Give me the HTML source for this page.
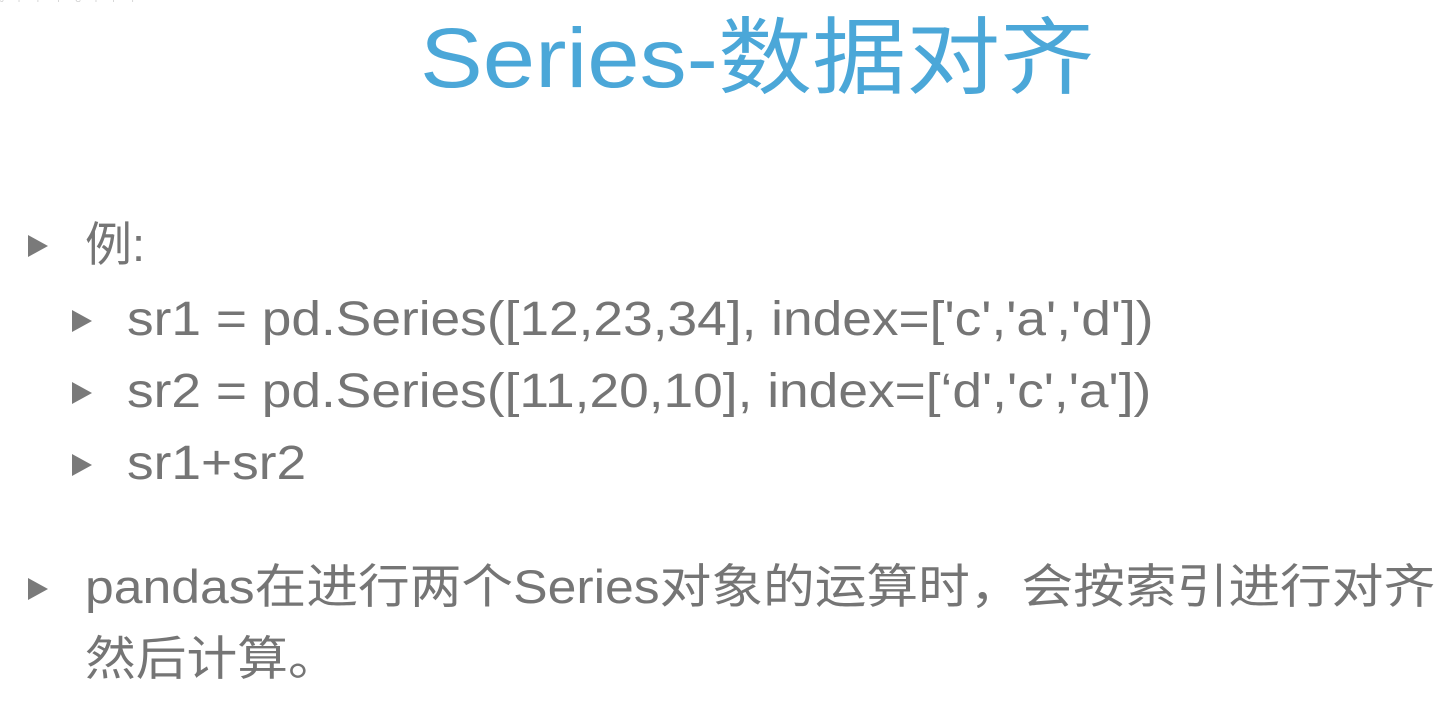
<!DOCTYPE html>
<html><head><meta charset="utf-8"><style>
body{margin:0;width:1448px;height:712px;background:#fff;overflow:hidden;position:relative;font-family:"Liberation Sans","Noto Sans CJK SC",sans-serif;color:#757575}
.t{position:absolute;white-space:nowrap;line-height:1;transform-origin:left top}
.b{position:absolute;width:0;height:0;border-top:11px solid transparent;border-bottom:11px solid transparent;border-left:20px solid #7a7a7a}
</style></head><body>
<div class="t" style="left:0;top:-4px;font-size:8px;letter-spacing:14px;color:#ccc">JFFYCITY</div>
<div class="t" style="left:420px;top:16px;font-size:84px;color:#4ba7d8;transform:scaleX(1.12)">Series-数据对齐</div>
<div class="b" style="left:28px;top:235px"></div>
<div class="t" style="left:85px;top:221px;font-size:47px">例:</div>
<div class="b" style="left:72px;top:310px"></div>
<div class="t" style="left:127px;top:296px;font-size:48px;transform:scaleX(1.11)">sr1 = pd.Series([12,23,34], index=['c','a','d'])</div>
<div class="b" style="left:72px;top:382px"></div>
<div class="t" style="left:127px;top:368px;font-size:48px;transform:scaleX(1.11)">sr2 = pd.Series([11,20,10], index=[‘d','c','a'])</div>
<div class="b" style="left:72px;top:454px"></div>
<div class="t" style="left:127px;top:440px;font-size:48px;transform:scaleX(1.11)">sr1+sr2</div>
<div class="b" style="left:28px;top:578px"></div>
<div class="t" style="left:85px;top:563px;font-size:47px;transform:scaleX(1.1)">pandas在进行两个Series对象的运算时，会按索引进行对齐</div>
<div class="t" style="left:85px;top:635px;font-size:47px;transform:scaleX(1.08)">然后计算。</div>
</body></html>
